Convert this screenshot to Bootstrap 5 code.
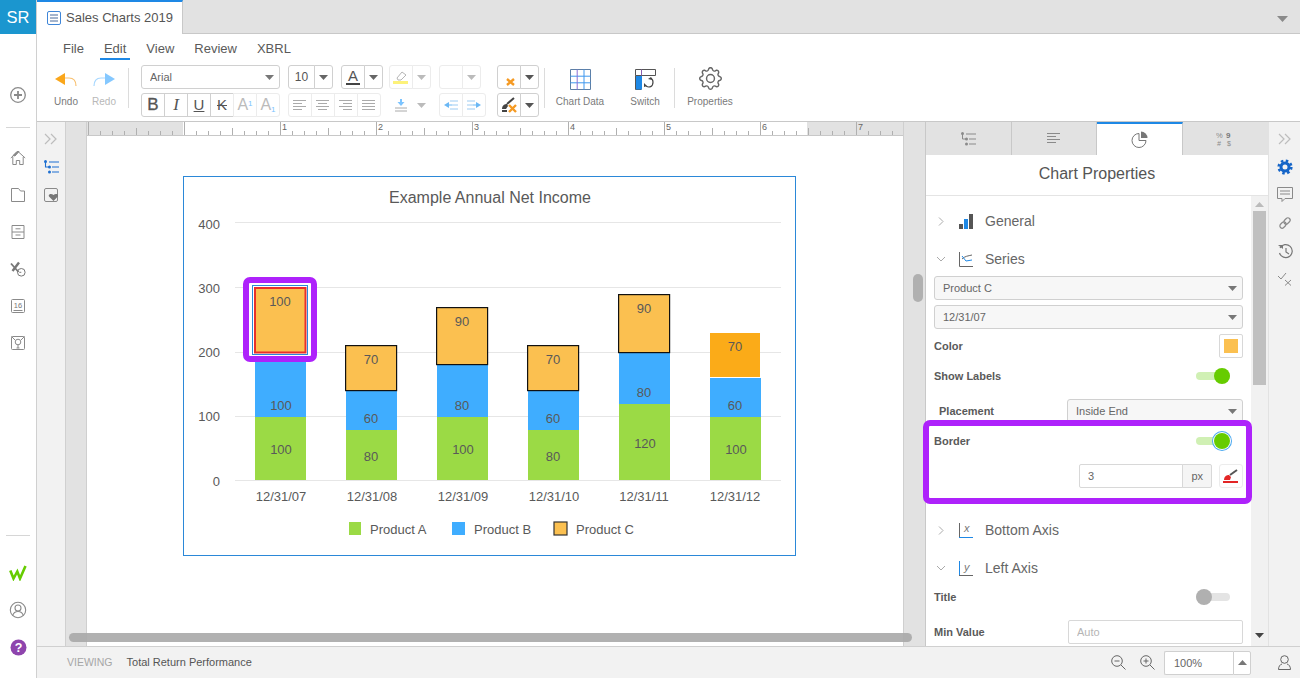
<!DOCTYPE html>
<html lang="en">
<head>
<meta charset="utf-8">
<title>Sales Charts 2019</title>
<link href="https://cdn.jsdelivr.net/npm/bootstrap@5.3.0/dist/css/bootstrap.min.css" rel="stylesheet">
<style>
html,body{height:678px;overflow:hidden;}
body{font-family:"Liberation Sans",Arial,sans-serif;color:#595959;background:#fff;}
svg{display:block;}
.shell{width:1300px;height:678px;overflow:hidden;}
.lrail{width:37px;flex:none;border-right:1px solid #d0d0d0;background:#fff;}
.srbox{height:34px;background:#1b96cf;color:#fff;font-size:16.500px;line-height:34px;text-align:center;}
.railbtn{height:37px;}
.railtop{margin-top:42.5px;}
.railrule{width:24px;border-top:1px solid #d6d6d6;}
.railrule1{margin:13px 0 12px;}
.raillow{padding-bottom:12.5px;}
.railrule2{margin-bottom:19px;}
.mainc{width:1263px;flex:none;}
.tabbar{height:34px;background:#e2e2e2;border-bottom:1px solid #c8c8c8;flex:none;}
.doctab{width:146px;height:34px;background:#fff;border-top:2px solid #1e88e5;border-right:1px solid #c8c8c8;padding-left:10px;font-size:13px;color:#555;gap:5px;white-space:nowrap;}
.topcaret{margin-right:12px;}
.ribbon{height:88px;flex:none;position:relative;border-bottom:1px solid #c8c8c8;}
.menuline{height:28px;padding:5px 0 0 22px;gap:12px;font-size:13px;}
.menuitem{height:21px;line-height:19px;padding:0 4px;color:#5a5a5a;}
.menuon{border-bottom:2px solid #1e88e5;}
.toolline{padding:3px 0 0 10px;}
.bigb{height:52px;font-size:10px;color:#7a7a7a;text-align:center;gap:4px;}
.w38{width:38px;}
.w62{width:62px;}
.w50{width:50px;}
.w60{width:60px;}
.faint{color:#b8b8b8;}
.undoicon{margin:8px 0 1px;}
.datai{margin-top:4px;}
.propi{margin-top:2px;}
.vrule{width:1px;height:40px;background:#dcdcdc;margin-top:3px;flex:none;}
.m5{margin-left:5px;}
.m12{margin-left:12px;}
.m6{margin-left:6px;}
.m4{margin-left:4px;}
.m9{margin-left:9px;}
.tcol{gap:4px;flex:none;}
.col139{width:139px;}
.col93{width:93px;margin-left:8px;}
.col96{width:96px;margin-left:8px;}
.col41{width:41px;margin-left:12px;}
.g8{gap:8px;}
.tb.btn{--bs-btn-border-radius:3px;--bs-btn-border-color:#d0d0d0;--bs-btn-bg:#fff;--bs-btn-color:#555;--bs-btn-padding-x:0;--bs-btn-padding-y:0;--bs-btn-font-size:12px;width:24px;height:24px;flex:none;display:flex;align-items:center;justify-content:center;}
.tb.soft{--bs-btn-border-color:#ececec;}
.tb.nob{--bs-btn-border-color:transparent;}
.tb.cw{width:19px;}
.tb.sz{width:27px;}
.pk.form-select{height:24px;min-height:24px;padding:0 20px 0 8px;font-size:11px;line-height:22px;color:#666;border:1px solid #d0d0d0;border-radius:3px;background-size:9px 5px;background-position:right 5px center;background-image:url("data:image/svg+xml,%3Csvg xmlns='http://www.w3.org/2000/svg' viewBox='0 0 9 5'%3E%3Cpath d='M0 0h9L4.500 5z' fill='%23777'/%3E%3C/svg%3E");}
.pk.tint{background-color:#f7f7f7;}
.fontpk.form-select{background-color:#fff;}
.fi{font-family:"Liberation Serif",serif;font-size:17px;font-style:italic;}
.fb{font-size:17px;font-weight:400;-webkit-text-stroke:.3px #555;}
.fu{font-size:15px;text-decoration:underline;}
.fs{font-size:15px;text-decoration:line-through;}
.fa{font-size:16px;color:#bbb;position:relative;}
.fa sup,.fa sub{font-size:8px;color:#7cc4ff;}
.fcol{font-size:15px;line-height:14px;border-bottom:2px solid #444;padding:0 2px;}
.workarea{height:524px;flex:none;}
.lside{width:29px;background:#f2f2f2;flex:none;padding-top:3px;border-right:1px solid #d0d0d0;}
.sidebtn{height:28px;width:100%;flex:none;}
.editor{width:860px;flex:none;position:relative;background:#e2e2e2;overflow:hidden;border-right:1px solid #c8c8c8;}
.ruler{margin-left:21px;width:816px;height:14px;background:#fff;border-bottom:1px solid #c8c8c8;}
.leftline{position:absolute;left:20px;top:0;bottom:0;border-left:1px solid #cfcfcf;}
.rightline{position:absolute;left:837px;top:0;bottom:0;border-left:1px solid #cfcfcf;}
.sheet{margin-left:21px;width:816px;height:510px;background:#fff;padding:40px 0 0 96px;}
.hthumb{position:absolute;left:3px;top:511px;width:843px;height:9px;border-radius:5px;background:#a8a8a8;opacity:.9;}
.vthumb{position:absolute;left:847px;top:152px;width:10px;height:28px;border-radius:5px;background:#b0b0b0;}
.props{width:342px;flex:none;}
.ptabs{height:33px;background:#e2e2e2;flex:none;}
.ptab{height:33px;border-right:1px solid #c8c8c8;}
.ptabon{background:#fff;border-top:2px solid #1e88e5;}
.phead{height:41px;line-height:38px;text-align:center;font-size:16px;border-bottom:1px solid #e4e4e4;flex:none;color:#555;}
.scrollzone{height:450px;position:relative;}
.pbody{width:325px;height:450px;overflow:hidden;padding:7px 8px 0;flex:none;}
.ptrack{width:17px;background:#f1f1f1;flex:none;padding-top:6px;}
.upc{margin:0 auto 4px;}
.vbar{width:13px;height:174px;margin:0 0 0 2px;background:#c0c0c0;}
.dnc{margin:248px auto 0;}
.sech{height:36px;margin-bottom:2px;font-size:14px;color:#666;}
.chev{width:14px;margin-right:11px;margin-left:0;}
.secicon{width:26px;flex:none;margin-right:0;}
.rowl{height:24px;font-size:11px;color:#5a5a5a;font-weight:700;}
.sel2{margin-top:5px;}
.sechgap{margin-top:-3px;}
.swatchbox{width:24px;height:24px;border:1px solid #d8d8d8;border-radius:2px;background:#fff;}
.swatch{width:14px;height:14px;background:#fbc050;}
.gap5{margin-top:5px;}
.gap6{margin-top:6px;}
.gap11{margin-top:11px;}
.tog{width:34px;height:16px;position:relative;margin-right:13px;flex:none;}
.tog::before{content:"";position:absolute;left:0;right:0;top:4px;height:8px;border-radius:4px;background:#d0f0b4;}
.tog::after{content:"";position:absolute;right:0;top:0;width:16px;height:16px;border-radius:50%;background:#66cc00;}
.togfocus::after{box-shadow:0 0 0 1px #fff,0 0 0 2px #4aa8f0;}
.togoff::before{background:#e4e4e4;}
.togoff::after{right:auto;left:0;background:#b0b0b0;}
.placelbl{padding-left:5px;width:133px;}
.selplace{width:176px;flex:none;}
.igroup{width:133px;height:24px;}
.igroup .form-control{height:24px;min-height:24px;font-size:11px;padding:0 8px;color:#666;border-color:#d8d8d8;border-radius:2px 0 0 2px;}
.igroup .input-group-text{font-size:11px;padding:0 8px;color:#666;background:#f5f5f5;border-color:#d8d8d8;border-radius:0 2px 2px 0;}
.gap7m{margin-left:7px;}
.bline{margin-top:11px;}
.bottomsec{margin-top:24px;margin-bottom:0;}
.leftsec{margin-top:2px;margin-bottom:-1px;}
.minin.form-control{width:175px;height:24px;min-height:24px;font-size:11px;padding:0 8px;border-color:#d8d8d8;border-radius:2px;flex:none;}
.minin.form-control::placeholder{color:#b5b5b5;}
.gap11b{margin-top:11px;}
.purplebox{position:absolute;left:-3px;top:224px;width:329px;height:84px;border:6px solid #ae22fb;border-radius:7px;pointer-events:none;}
.rrail{width:32px;flex:none;background:#f2f2f2;padding-top:3px;border-left:1px solid #e2e2e2;}
.rrail svg{flex:none;}
.statusb{height:32px;flex:none;background:#f2f2f2;border-top:1px solid #d0d0d0;font-size:10.5px;padding-left:30px;}
.viewing{color:#a6a6a6;margin-right:14px;}
.stname{color:#555;font-size:11px;}
.zoomgrp{width:87px;height:24px;}
.zoomval{flex:1;border:1px solid #d0d0d0;border-right:0;border-radius:2px 0 0 2px;background:#fff;font-size:11px;line-height:22px;padding-left:9px;color:#666;}
.zoomup{width:18px;border:1px solid #d0d0d0;border-radius:0 2px 2px 0;background:#fff;}
.zgap{gap:14px;margin-right:9px;}
.userc{margin:0 9px 0 27px;}
.chartfig{font-family:"Liberation Sans",Arial,sans-serif;}
</style>
</head>
<body>
<div class="shell d-flex">
  <aside class="lrail d-flex flex-column align-items-center">
    <div class="srbox w-100">SR</div>
    <div class="railbtn railtop d-flex align-items-center justify-content-center">
      <svg width="18" height="18" viewBox="0 0 18 18" fill="none" stroke="#8a8a8a" stroke-width="1.3"><circle cx="9" cy="9" r="7.3"/><path d="M5 9h8M9 5v8" stroke-width="1.8"/></svg>
    </div>
    <div class="railrule railrule1"></div>
    <div class="railbtn d-flex align-items-center justify-content-center">
      <svg width="16" height="16" viewBox="0 0 16 16" fill="none" stroke="#8a8a8a"><path d="M.8 8 8 1.500 15.200 8M2.800 7v7.500h3.500v-4h3.400v4h3.500V7"/><path d="M3 5.500 7 1.500h2L5 6z" fill="#8a8a8a"/></svg>
    </div>
    <div class="railbtn d-flex align-items-center justify-content-center">
      <svg width="16" height="16" viewBox="0 0 16 16" fill="none" stroke="#8a8a8a"><path d="M1.500 14.500V1.500h7l2 2.500h4v10.500z"/></svg>
    </div>
    <div class="railbtn d-flex align-items-center justify-content-center">
      <svg width="16" height="16" viewBox="0 0 16 16" fill="none" stroke="#8a8a8a"><path d="M2 1.500h12v13H2zM2 8h12M5.500 4.800h5M5.500 11h5"/></svg>
    </div>
    <div class="railbtn d-flex align-items-center justify-content-center">
      <svg width="16" height="16" viewBox="0 0 16 16" fill="none" stroke="#777"><path d="M1 2.500 8.500 11" stroke-width="1.800"/><path d="M9 1.500 2.500 10" stroke-width="2.400"/><circle cx="11.300" cy="11.300" r="3.800"/><path d="M11.300 11.300h-2"/></svg>
    </div>
    <div class="railbtn d-flex align-items-center justify-content-center">
      <svg width="16" height="16" viewBox="0 0 16 16" fill="none" stroke="#8a8a8a"><rect x="1.500" y="1.500" width="13" height="13" rx="1"/><path d="M3.500 12.500h9"/><text x="8" y="10" font-size="7.500" text-anchor="middle" fill="#777" stroke="none" font-family="Liberation Sans">16</text></svg>
    </div>
    <div class="railbtn d-flex align-items-center justify-content-center">
      <svg width="16" height="16" viewBox="0 0 16 16" fill="none" stroke="#8a8a8a"><rect x="1.500" y="1.500" width="13" height="13" rx="1"/><path d="M1.500 1.500 5 5M14.500 1.500 11 5"/><circle cx="8" cy="7" r="2.800"/><path d="M8 9.800V13M6.500 13h3"/></svg>
    </div>
    <div class="raillow mt-auto d-flex flex-column align-items-center">
      <div class="railrule railrule2"></div>
      <div class="railbtn d-flex align-items-center justify-content-center">
        <svg width="18" height="16" viewBox="0 0 18 16" fill="none" stroke="#66cc00" stroke-width="2.600"><path d="M1.300 5.500 4.500 13.500 8.300 6.500 11 13.500 16.500 1"/></svg>
      </div>
      <div class="railbtn d-flex align-items-center justify-content-center">
        <svg width="18" height="18" viewBox="0 0 18 18" fill="none" stroke="#8a8a8a" stroke-width="1.100"><circle cx="9" cy="9" r="7.700"/><circle cx="9" cy="7" r="3"/><path d="M3.700 14.500C4.500 11.800 6.500 10.500 9 10.500s4.500 1.300 5.300 4"/></svg>
      </div>
      <div class="railbtn d-flex align-items-center justify-content-center">
        <svg width="17" height="17" viewBox="0 0 17 17"><circle cx="8.500" cy="8.500" r="8" fill="#8e44ad"/><text x="8.500" y="13" font-size="12.500" font-weight="700" text-anchor="middle" fill="#fff" font-family="Liberation Sans">?</text></svg>
      </div>
    </div>
  </aside>

  <div class="mainc d-flex flex-column">
    <div class="tabbar d-flex justify-content-between align-items-start">
      <div class="doctab d-flex align-items-center">
        <svg width="14" height="14" viewBox="0 0 14 14" fill="none" stroke="#3f86d8"><rect x=".5" y=".5" width="13" height="13" rx="1.500"/><path d="M3 4h8M3 7h8M3 10h8" stroke="#4a6b9a"/></svg>
        <span>Sales Charts 2019</span>
      </div>
      <svg class="topcaret mt-3" width="11" height="6" viewBox="0 0 11 6"><path d="M0 0h11L5.500 6z" fill="#8a8a8a"/></svg>
    </div>

    <div class="ribbon">
      <div class="menuline d-flex">
        <div class="menuitem">File</div>
        <div class="menuitem menuon">Edit</div>
        <div class="menuitem">View</div>
        <div class="menuitem">Review</div>
        <div class="menuitem">XBRL</div>
      </div>
      <div class="toolline d-flex align-items-start">
        <div class="bigb w38 d-flex flex-column align-items-center">
          <svg class="undoicon" width="24" height="16" viewBox="0 0 24 16" fill="none"><path d="M9 5h6q7 0 7 8" stroke="#f8c070" stroke-width="1.200"/><path d="M1 6 11 0v12z" fill="#faa61a"/></svg>
          <span>Undo</span>
        </div>
        <div class="bigb w38 faint d-flex flex-column align-items-center">
          <svg class="undoicon" width="24" height="16" viewBox="0 0 24 16" fill="none"><path d="M15 5H9q-7 0-7 8" stroke="#a8d8ff" stroke-width="1.200"/><path d="M23 6 13 0v12z" fill="#85c8ff"/></svg>
          <span>Redo</span>
        </div>
        <div class="vrule m5"></div>
        <div class="tcol col139 m12 d-flex flex-column">
          <select class="pk form-select fontpk" aria-label="Font"><option>Arial</option></select>
          <div class="btn-group">
            <button type="button" class="tb btn"><span class="fb">B</span></button>
            <button type="button" class="tb btn"><span class="fi">I</span></button>
            <button type="button" class="tb btn"><span class="fu">U</span></button>
            <button type="button" class="tb btn"><span class="fs">K</span></button>
            <button type="button" class="tb btn soft"><span class="fa">A<sup>1</sup></span></button>
            <button type="button" class="tb btn soft"><span class="fa">A<sub>1</sub></span></button>
          </div>
        </div>
        <div class="tcol col93 d-flex flex-column">
          <div class="d-flex g8">
            <div class="btn-group">
              <button type="button" class="tb btn sz">10</button>
              <button type="button" class="tb btn cw"><svg width="9" height="5" viewBox="0 0 9 5"><path d="M0 0h9L4.500 5z" fill="#666"/></svg></button>
            </div>
            <div class="btn-group">
              <button type="button" class="tb btn"><span class="fcol">A</span></button>
              <button type="button" class="tb btn cw"><svg width="9" height="5" viewBox="0 0 9 5"><path d="M0 0h9L4.500 5z" fill="#666"/></svg></button>
            </div>
          </div>
          <div class="btn-group">
            <button type="button" class="tb btn soft"><svg width="14" height="12" viewBox="0 0 14 12" stroke="#aaa"><path d="M0 1.500h13M0 4.500h9M0 7.500h13M0 10.500h9"/></svg></button>
            <button type="button" class="tb btn soft"><svg width="14" height="12" viewBox="0 0 14 12" stroke="#aaa"><path d="M0 1.500h13M2 4.500h9M0 7.500h13M2 10.500h9"/></svg></button>
            <button type="button" class="tb btn soft"><svg width="14" height="12" viewBox="0 0 14 12" stroke="#aaa"><path d="M0 1.500h13M4 4.500h9M0 7.500h13M4 10.500h9"/></svg></button>
            <button type="button" class="tb btn soft"><svg width="14" height="12" viewBox="0 0 14 12" stroke="#aaa"><path d="M0 1.500h13M0 4.500h13M0 7.500h13M0 10.500h13"/></svg></button>
          </div>
        </div>
        <div class="tcol col96 d-flex flex-column">
          <div class="d-flex g8">
            <div class="btn-group">
              <button type="button" class="tb btn soft"><svg width="16" height="15" viewBox="0 0 16 15"><path d="M4 8 9 2l4 3-5 5H5z" fill="#fff" stroke="#b5b5b5"/><rect y="11" width="15" height="3" fill="#fdf27a"/></svg></button>
              <button type="button" class="tb btn soft cw"><svg width="9" height="5" viewBox="0 0 9 5"><path d="M0 0h9L4.500 5z" fill="#bbb"/></svg></button>
            </div>
            <div class="btn-group">
              <button type="button" class="tb btn soft"></button>
              <button type="button" class="tb btn soft cw"><svg width="9" height="5" viewBox="0 0 9 5"><path d="M0 0h9L4.500 5z" fill="#bbb"/></svg></button>
            </div>
          </div>
          <div class="d-flex g8">
            <div class="btn-group">
              <button type="button" class="tb btn nob"><svg width="14" height="14" viewBox="0 0 14 14" fill="none"><path d="M7 1v4" stroke="#7cc4ff" stroke-width="2"/><path d="M3.500 4 7 8l3.500-4z" fill="#7cc4ff"/><path d="M1 10h12M1 13h12" stroke="#aaa"/></svg></button>
              <button type="button" class="tb btn nob cw"><svg width="9" height="5" viewBox="0 0 9 5"><path d="M0 0h9L4.500 5z" fill="#bbb"/></svg></button>
            </div>
            <div class="btn-group">
              <button type="button" class="tb btn soft"><svg width="14" height="10" viewBox="0 0 14 10" fill="none"><path d="M6 1h8M6 9h8M8 5h6" stroke="#9ccbf2"/><path d="M0 5l5-3v6z" fill="#6bb8f5"/><path d="M4 5h4" stroke="#6bb8f5"/></svg></button>
              <button type="button" class="tb btn soft"><svg width="14" height="10" viewBox="0 0 14 10" fill="none"><path d="M0 1h8M0 9h8M0 5h6" stroke="#9ccbf2"/><path d="M14 5 9 2v6z" fill="#6bb8f5"/><path d="M6 5h4" stroke="#6bb8f5"/></svg></button>
            </div>
          </div>
        </div>
        <div class="tcol col41 d-flex flex-column">
          <div class="btn-group">
            <button type="button" class="tb btn"><svg class="mt-1" width="14" height="14" viewBox="0 0 14 14"><path d="M5 7l7 6M12 7l-7 6" stroke="#f59a23" stroke-width="2.400"/></svg></button>
            <button type="button" class="tb btn cw"><svg width="9" height="5" viewBox="0 0 9 5"><path d="M0 0h9L4.500 5z" fill="#555"/></svg></button>
          </div>
          <div class="btn-group">
            <button type="button" class="tb btn"><svg width="17" height="16" viewBox="0 0 17 16"><path d="M1 12c0-4 3-5 5-5l1 2-2 3z" fill="#444"/><path d="M6 7l7-6" stroke="#444" stroke-width="2"/><path d="M1 14h5" stroke="#444" stroke-width="2"/><path d="M8 8l7 7M15 8l-7 7" stroke="#f59a23" stroke-width="2.400"/></svg></button>
            <button type="button" class="tb btn cw"><svg width="9" height="5" viewBox="0 0 9 5"><path d="M0 0h9L4.500 5z" fill="#555"/></svg></button>
          </div>
        </div>
        <div class="vrule m6"></div>
        <div class="bigb w62 m4 d-flex flex-column align-items-center">
          <svg width="21" height="21" viewBox="0 0 21 21" fill="none" class="datai"><path d="M.5.500h20v20H.5z" stroke="#5d7fa6"/><path d="M.5 7.200h20M.5 13.800h20M14 .5v20" stroke="#3e97ee"/><path d="M7.200.5v20" stroke="#8c6fd6"/></svg>
          <span>Chart Data</span>
        </div>
        <div class="bigb w50 m9 d-flex flex-column align-items-center">
          <svg width="21" height="21" viewBox="0 0 21 21" fill="none" class="datai"><path d="M.5.500h20v6H.5zM.5 6.500v14h6" stroke="#555"/><rect x="1" y="7" width="6" height="13.500" fill="#1e88e5"/><path d="M6.500.5v6" stroke="#8c5fb0"/><path d="M11 17c3 2 7 1 7-4 0-2-1-3-2-4" stroke="#444" stroke-width="1.200"/><path d="M13 10l3-2 1 3z" fill="#444"/><path d="M9 14l3 3-3 1z" fill="#444"/></svg>
          <span>Switch</span>
        </div>
        <div class="vrule m4"></div>
        <div class="bigb w60 m5 d-flex flex-column align-items-center">
          <svg class="propi" width="23" height="23" viewBox="0 0 16 16" fill="#666"><path d="M8 4.754a3.246 3.246 0 1 0 0 6.492 3.246 3.246 0 0 0 0-6.492zM5.754 8a2.246 2.246 0 1 1 4.492 0 2.246 2.246 0 0 1-4.492 0z"/><path d="M9.796 1.343c-.527-1.790-3.065-1.790-3.592 0l-.094.319a.873.873 0 0 1-1.255.520l-.292-.160c-1.640-.892-3.433.902-2.540 2.541l.159.292a.873.873 0 0 1-.520 1.255l-.319.094c-1.790.527-1.790 3.065 0 3.592l.319.094a.873.873 0 0 1 .520 1.255l-.160.292c-.892 1.640.901 3.434 2.541 2.540l.292-.159a.873.873 0 0 1 1.255.520l.094.319c.527 1.790 3.065 1.790 3.592 0l.094-.319a.873.873 0 0 1 1.255-.520l.292.160c1.640.893 3.434-.902 2.540-2.541l-.159-.292a.873.873 0 0 1 .520-1.255l.319-.094c1.790-.527 1.790-3.065 0-3.592l-.319-.094a.873.873 0 0 1-.520-1.255l.160-.292c.893-1.640-.902-3.433-2.541-2.540l-.292.159a.873.873 0 0 1-1.255-.520l-.094-.319zm-2.633.283c.246-.835 1.428-.835 1.674 0l.094.319a1.873 1.873 0 0 0 2.693 1.115l.291-.160c.764-.415 1.600.420 1.184 1.185l-.159.292a1.873 1.873 0 0 0 1.116 2.692l.318.094c.835.246.835 1.428 0 1.674l-.319.094a1.873 1.873 0 0 0-1.115 2.693l.160.291c.415.764-.420 1.600-1.185 1.184l-.291-.159a1.873 1.873 0 0 0-2.693 1.116l-.094.318c-.246.835-1.428.835-1.674 0l-.094-.319a1.873 1.873 0 0 0-2.692-1.115l-.292.160c-.764.415-1.600-.420-1.184-1.185l.159-.291A1.873 1.873 0 0 0 1.945 8.930l-.319-.094c-.835-.246-.835-1.428 0-1.674l.319-.094A1.873 1.873 0 0 0 3.060 4.377l-.160-.292c-.415-.764.420-1.600 1.185-1.184l.292.159a1.873 1.873 0 0 0 2.692-1.115l.094-.319z"/></svg>
          <span>Properties</span>
        </div>
      </div>
    </div>

    <div class="workarea d-flex">
      <div class="lside d-flex flex-column align-items-center">
        <div class="sidebtn d-flex align-items-center justify-content-center"><svg width="14" height="12" viewBox="0 0 14 12" fill="none" stroke="#bdbdbd" stroke-width="1.200"><path d="M1 1l5 5-5 5M7 1l5 5-5 5"/></svg></div>
        <div class="sidebtn d-flex align-items-center justify-content-center"><svg width="15" height="14" viewBox="0 0 15 14" fill="none" stroke="#1d6fd1"><path d="M5 2h10M8 7h7M8 12h7M1.500 2v5H5" stroke-width="1.100"/><circle cx="1.500" cy="1.500" r="1.500" fill="#1d6fd1" stroke="none"/><circle cx="5.500" cy="7" r="1.500" fill="#1d6fd1" stroke="none"/><circle cx="5.500" cy="12" r="1.500" fill="#1d6fd1" stroke="none"/></svg></div>
        <div class="sidebtn d-flex align-items-center justify-content-center"><svg width="14" height="14" viewBox="0 0 14 14"><rect x=".5" y=".5" width="13" height="13" rx="1.500" fill="none" stroke="#8a8a8a"/><path d="M9.500 13 5 8.500c-1.300-2.500 2.500-3.500 4.500-1.500 2-2 5.500-1 4.300 1.500z" fill="#777"/></svg></div>
      </div>

      <div class="editor">
        <div class="ruler">
          <svg width="816" height="13" viewBox="0 0 816 13" class="chartfig">
            <defs>
              <pattern id="rticks" x="1" y="0" width="96" height="13" patternUnits="userSpaceOnUse">
                <path d="M.5 0v13M12.500 9v4M24.500 9v4M36.500 9v4M48.500 6v7M60.500 9v4M72.500 9v4M84.500 9v4" stroke="#b0b0b0" fill="none"/>
              </pattern>
            </defs>
            <rect x="0" y="0" width="96" height="13" fill="#e2e2e2"/>
            <rect x="720" y="0" width="96" height="13" fill="#e2e2e2"/>
            <rect x="0" y="0" width="816" height="13" fill="url(#rticks)"/>
            <g font-size="9" fill="#666">
              <text x="195" y="8">1</text><text x="291" y="8">2</text><text x="387" y="8">3</text><text x="483" y="8">4</text><text x="579" y="8">5</text><text x="675" y="8">6</text><text x="771" y="8">7</text>
            </g>
          </svg>
        </div>
        <div class="sheet">
          <svg width="614" height="381" viewBox="183 176 614 381" class="chartfig" role="img" aria-label="Example Annual Net Income chart">
            <rect x="183.500" y="176.500" width="612" height="379" fill="#fff" stroke="#2b88d8"/>
            <text x="490" y="203" font-size="16" text-anchor="middle" fill="#595959">Example Annual Net Income</text>
            <path d="M235 222.500h546M235 287.500h546M235 352.500h546M235 416.500h546M235 480.500h546" stroke="#e6e6e6" fill="none"/>
            <g font-size="13" fill="#595959" text-anchor="end">
              <text x="220" y="229">400</text><text x="220" y="293">300</text><text x="220" y="357">200</text><text x="220" y="421">100</text><text x="220" y="486">0</text>
            </g>
            <g fill="#9bda45">
              <rect x="255" y="417" width="51" height="63"/><rect x="346" y="430" width="51" height="50"/><rect x="437" y="417" width="51" height="63"/><rect x="528" y="430" width="51" height="50"/><rect x="619" y="404" width="51" height="76"/><rect x="710" y="417" width="51" height="63"/>
            </g>
            <g fill="#3fadff">
              <rect x="255" y="353" width="51" height="64"/><rect x="346" y="391" width="51" height="39"/><rect x="437" y="365" width="51" height="52"/><rect x="528" y="391" width="51" height="39"/><rect x="619" y="353" width="51" height="51"/><rect x="710" y="378" width="51" height="39"/>
            </g>
            <g fill="#fbc050" stroke="#111" stroke-width="1.200">
              <rect x="345.600" y="345.600" width="51" height="45"/><rect x="436.600" y="307.600" width="51" height="57"/><rect x="527.600" y="345.600" width="51" height="45"/><rect x="618.600" y="294.600" width="51" height="58"/>
            </g>
            <rect x="710" y="333" width="50" height="44" fill="#fbab18"/>
            <rect x="249" y="283" width="62" height="73" fill="#fff"/>
            <rect x="252.500" y="285.500" width="55" height="69" fill="#fff" stroke="#2b88d8"/>
            <rect x="255" y="288" width="50.500" height="64.500" fill="#fbc050" stroke="#e8302a" stroke-width="2"/>
            <rect x="246" y="280" width="68" height="79" rx="4" fill="none" stroke="#ae22fb" stroke-width="6"/>
            <g font-size="13" fill="#595959" text-anchor="middle">
              <text x="280" y="306">100</text><text x="281" y="410">100</text><text x="281" y="454">100</text>
              <text x="371" y="364">70</text><text x="371" y="423">60</text><text x="371" y="461">80</text>
              <text x="462" y="326">90</text><text x="462" y="410">80</text><text x="463" y="454">100</text>
              <text x="553" y="364">70</text><text x="553" y="423">60</text><text x="553" y="461">80</text>
              <text x="644" y="313">90</text><text x="644" y="397">80</text><text x="645" y="448">120</text>
              <text x="735" y="351">70</text><text x="735" y="410">60</text><text x="736" y="454">100</text>
            </g>
            <g font-size="13" fill="#595959" text-anchor="middle">
              <text x="281" y="501">12/31/07</text><text x="372" y="501">12/31/08</text><text x="463" y="501">12/31/09</text><text x="554" y="501">12/31/10</text><text x="644" y="501">12/31/11</text><text x="735" y="501">12/31/12</text>
            </g>
            <rect x="349" y="522" width="12" height="13" fill="#9bda45"/>
            <rect x="452" y="522" width="13" height="13" fill="#3fadff"/>
            <rect x="554" y="522" width="13" height="13" fill="#fbc050" stroke="#333" stroke-width="1.200"/>
            <g font-size="13" fill="#595959">
              <text x="370" y="534">Product A</text><text x="474" y="534">Product B</text><text x="576" y="534">Product C</text>
            </g>
          </svg>
        </div>
        <div class="leftline"></div>
        <div class="rightline"></div>
        <div class="hthumb"></div>
        <div class="vthumb"></div>
      </div>

      <div class="props d-flex flex-column">
        <div class="ptabs d-flex">
          <div class="ptab d-flex align-items-center justify-content-center col-3 flex-shrink-1">
            <svg width="15" height="14" viewBox="0 0 15 14" fill="none" stroke="#8a8a8a"><path d="M5 2h10M8 7h7M8 12h7M1.500 2v5H5"/><circle cx="1.500" cy="1.500" r="1.500" fill="#8a8a8a" stroke="none"/><circle cx="5.500" cy="7" r="1.500" fill="#8a8a8a" stroke="none"/><circle cx="5.500" cy="12" r="1.500" fill="#8a8a8a" stroke="none"/></svg>
          </div>
          <div class="ptab d-flex align-items-center justify-content-center col-3">
            <svg width="13" height="11" viewBox="0 0 13 11" stroke="#8a8a8a"><path d="M0 .5h13M0 3.500h9M0 6.500h13M0 9.500h9"/></svg>
          </div>
          <div class="ptab ptabon d-flex align-items-center justify-content-center col-3">
            <svg width="17" height="17" viewBox="0 0 17 17" fill="none" stroke="#777"><path d="M8 2.500a7 7 0 1 0 7 7H8z"/><path d="M10 .5a6.500 6.500 0 0 1 6.500 6.500H10z" fill="#777" stroke="none"/></svg>
          </div>
          <div class="ptab d-flex align-items-center justify-content-center col-3 border-0">
            <svg width="18" height="16" viewBox="0 0 18 16"><text x="0" y="7" font-size="7.500" fill="#8a8a8a" font-family="Liberation Sans">%</text><text x="10" y="7" font-size="8" font-weight="700" fill="#777" font-family="Liberation Sans">9</text><text x="1" y="15" font-size="7" fill="#8a8a8a" font-style="italic" font-family="Liberation Sans">#</text><text x="11" y="15" font-size="7" fill="#8a8a8a" font-family="Liberation Sans">$</text></svg>
          </div>
        </div>
        <div class="phead">Chart Properties</div>
        <div class="scrollzone d-flex">
          <div class="pbody">
            <div class="sech d-flex align-items-center">
              <svg class="chev" width="14" height="9" viewBox="0 0 14 9" fill="none" stroke="#aaa"><path d="M5 .5 9 4.500 5 8.500"/></svg>
              <svg class="secicon" width="26" height="15" viewBox="0 0 26 15"><rect x="0" y="10" width="4" height="5" fill="#555"/><rect x="5" y="5" width="4" height="10" fill="#1e88e5"/><rect x="10" y="0" width="4" height="15" fill="#555"/></svg>
              <span>General</span>
            </div>
            <div class="sech d-flex align-items-center">
              <svg class="chev" width="14" height="9" viewBox="0 0 14 9" fill="none" stroke="#aaa"><path d="M3 2 7 6l4-4"/></svg>
              <svg class="secicon" width="26" height="15" viewBox="0 0 26 15" fill="none"><path d="M.5 0v14.500H14" stroke="#666"/><path d="M3 7c3-3 6-3 10-4" stroke="#666"/><path d="M3 4l4 5 6-1" stroke="#1e88e5"/></svg>
              <span>Series</span>
            </div>
            <select class="pk form-select tint sechgap" aria-label="Series"><option>Product C</option></select>
            <select class="pk form-select tint sel2" aria-label="Point"><option>12/31/07</option></select>
            <div class="rowl d-flex align-items-center justify-content-between gap5">
              <span>Color</span>
              <div class="swatchbox d-flex align-items-center justify-content-center"><div class="swatch"></div></div>
            </div>
            <div class="rowl d-flex align-items-center justify-content-between gap6">
              <span>Show Labels</span><div class="tog"></div>
            </div>
            <div class="rowl d-flex align-items-center justify-content-between gap11">
              <span class="placelbl">Placement</span>
              <select class="pk form-select tint selplace" aria-label="Placement"><option>Inside End</option></select>
            </div>
            <div class="rowl d-flex align-items-center justify-content-between gap6">
              <span>Border</span><div class="tog togfocus"></div>
            </div>
            <div class="d-flex justify-content-end bline">
              <div class="input-group igroup flex-nowrap">
                <input class="form-control" type="text" value="3" aria-label="Border width">
                <span class="input-group-text">px</span>
              </div>
              <button type="button" class="tb btn gap7m soft"><svg width="16" height="15" viewBox="0 0 16 15"><path d="M1 11c0-4 3-5 5-5l2 2-1 3z" fill="#e32626"/><path d="M7 6l7-5" stroke="#555" stroke-width="2"/><rect y="12" width="15" height="2" fill="#e32626"/></svg></button>
            </div>
            <div class="sech d-flex align-items-center bottomsec">
              <svg class="chev" width="14" height="9" viewBox="0 0 14 9" fill="none" stroke="#aaa"><path d="M5 .5 9 4.500 5 8.500"/></svg>
              <svg class="secicon" width="26" height="15" viewBox="0 0 26 15" fill="none"><path d="M.5 0v14.500" stroke="#666"/><path d="M0 14.500h14" stroke="#1e88e5"/><text x="5" y="9" font-size="11" font-style="italic" fill="#777" font-family="Liberation Sans">x</text></svg>
              <span>Bottom Axis</span>
            </div>
            <div class="sech d-flex align-items-center leftsec">
              <svg class="chev" width="14" height="9" viewBox="0 0 14 9" fill="none" stroke="#aaa"><path d="M3 2 7 6l4-4"/></svg>
              <svg class="secicon" width="26" height="15" viewBox="0 0 26 15" fill="none"><path d="M.5 0v14.500" stroke="#1e88e5"/><path d="M0 14.500h14" stroke="#666"/><text x="5" y="10" font-size="11" font-style="italic" fill="#777" font-family="Liberation Sans">y</text></svg>
              <span>Left Axis</span>
            </div>
            <div class="rowl d-flex align-items-center justify-content-between">
              <span>Title</span><div class="tog togoff"></div>
            </div>
            <div class="rowl d-flex align-items-center justify-content-between gap11b">
              <span>Min Value</span>
              <input class="minin form-control" type="text" placeholder="Auto" aria-label="Min Value">
            </div>
          </div>
          <div class="ptrack">
            <svg class="upc" width="9" height="5" viewBox="0 0 9 5"><path d="M0 5h9L4.500 0z" fill="#bbb"/></svg>
            <div class="vbar"></div>
            <svg class="dnc" width="9" height="5" viewBox="0 0 9 5"><path d="M0 0h9L4.500 5z" fill="#444"/></svg>
          </div>
          <div class="purplebox"></div>
        </div>
      </div>

      <div class="rrail d-flex flex-column align-items-center">
        <div class="sidebtn d-flex align-items-center justify-content-center"><svg width="14" height="12" viewBox="0 0 14 12" fill="none" stroke="#bdbdbd" stroke-width="1.200"><path d="M1 1l5 5-5 5M7 1l5 5-5 5"/></svg></div>
        <div class="sidebtn d-flex align-items-center justify-content-center"><svg width="16" height="16" viewBox="0 0 16 16" fill="none" stroke="#1565c8"><circle cx="8" cy="8" r="4" stroke-width="3"/><circle cx="8" cy="8" r="6.300" stroke-width="2.600" stroke-dasharray="2.500 2.450"/></svg></div>
        <div class="sidebtn d-flex align-items-center justify-content-center"><svg width="16" height="16" viewBox="0 0 16 16" fill="none" stroke="#8a8a8a"><path d="M.5.500h15v11H8l-3 3v-3H.5zM3 4h10M3 7h10" /></svg></div>
        <div class="sidebtn d-flex align-items-center justify-content-center"><svg width="14" height="14" viewBox="0 0 14 14" fill="none" stroke="#8a8a8a" stroke-width="1.200"><rect x="6.750" y="1.500" width="4.500" height="7" rx="2.250" transform="rotate(45 9 5)"/><rect x="2.750" y="5.500" width="4.500" height="7" rx="2.250" transform="rotate(45 5 9)"/></svg></div>
        <div class="sidebtn d-flex align-items-center justify-content-center"><svg width="16" height="16" viewBox="0 0 16 16" fill="none" stroke="#777"><path d="M3 5a6.500 6.500 0 1 1-.5 5" stroke-width="1.200"/><path d="M1 2h5v4z" fill="#777" stroke="none"/><path d="M9 5v4l3 2" stroke-width="1.200"/></svg></div>
        <div class="sidebtn d-flex align-items-center justify-content-center"><svg width="16" height="14" viewBox="0 0 16 14" fill="none" stroke="#8a8a8a"><path d="M1 4l3 3 5-6M8 8l6 5.500M14 8l-6 5.500"/></svg></div>
      </div>
    </div>

    <div class="statusb d-flex align-items-center">
      <span class="viewing">VIEWING</span>
      <span class="stname">Total Return Performance</span>
      <div class="ms-auto d-flex align-items-center">
        <div class="d-flex zgap">
          <svg width="15" height="15" viewBox="0 0 15 15" fill="none" stroke="#666"><circle cx="6" cy="6" r="5.300"/><path d="M10 10l4.500 4.500M3.500 6h5"/></svg>
          <svg width="15" height="15" viewBox="0 0 15 15" fill="none" stroke="#666"><circle cx="6" cy="6" r="5.300"/><path d="M10 10l4.500 4.500M3.500 6h5M6 3.500v5"/></svg>
        </div>
        <div class="zoomgrp d-flex">
          <div class="zoomval">100%</div>
          <div class="zoomup d-flex align-items-center justify-content-center"><svg width="9" height="5" viewBox="0 0 9 5"><path d="M0 5h9L4.500 0z" fill="#777"/></svg></div>
        </div>
        <svg class="userc" width="13" height="15" viewBox="0 0 13 15" fill="none" stroke="#666"><circle cx="6.500" cy="4.500" r="3.800"/><path d="M.5 14.500c0-3 1.500-5 3.500-5.500M12.500 14.500c0-3-1.500-5-3.500-5.500M.5 14.500h12"/></svg>
      </div>
    </div>
  </div>
</div>
<script src="https://cdn.jsdelivr.net/npm/bootstrap@5.3.0/dist/js/bootstrap.bundle.min.js"></script>
</body>
</html>
